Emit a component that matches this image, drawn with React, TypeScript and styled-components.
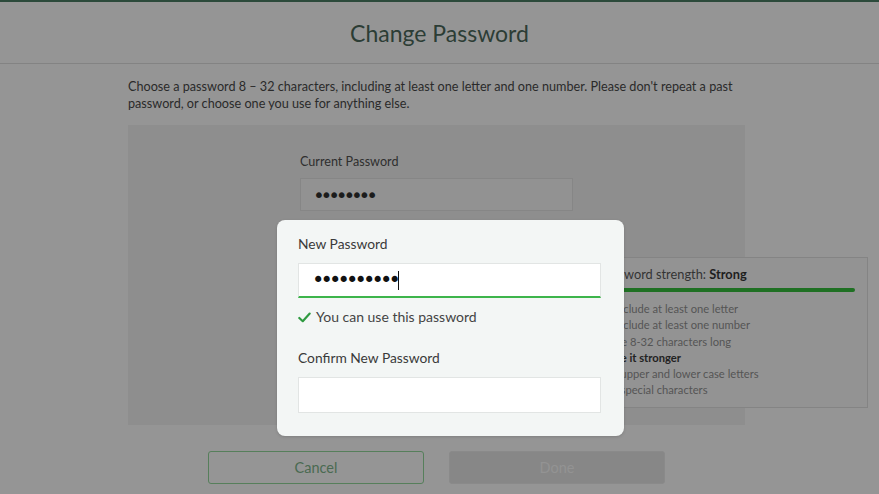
import React from "react";
import styled, { createGlobalStyle } from "styled-components";

const Global = createGlobalStyle`
  html, body { margin: 0; padding: 0; }
  body {
    background: #959595;
    font-family: "Segoe UI", Lato, "Noto Sans", sans-serif;
    -webkit-font-smoothing: antialiased;
  }
`;

const Page = styled.div`
  position: relative;
  width: 879px;
  height: 494px;
  overflow: hidden;
  background: #959595;
`;

const TopBar = styled.div`
  height: 2px;
  background: #2c4a3b;
`;

const Header = styled.header`
  height: 61px;
  display: flex;
  align-items: center;
  justify-content: center;
  border-bottom: 1px solid #838383;
`;

const Title = styled.h1`
  margin: 0;
  font-size: 23px;
  font-weight: 400;
  color: #2c3d35;
`;

const Main = styled.main`
  width: 617px;
  padding-left: 128px;
`;

const Intro = styled.p`
  margin: 14px 0 0;
  font-size: 12.65px;
  line-height: 17px;
  color: #2a2a2a;
`;

const Panel = styled.section`
  margin-top: 13px;
  height: 300px;
  box-sizing: border-box;
  background: #8e8e8e;
  padding: 28px 0 0 172px;
`;

const Field = styled.div<{ $gap?: number }>`
  display: flex;
  flex-direction: column;
  gap: ${(p) => p.$gap ?? 8}px;
`;

const Label = styled.label<{ $dim?: boolean }>`
  font-size: ${(p) => (p.$dim ? 12.6 : 13.8)}px;
  line-height: ${(p) => (p.$dim ? 17 : 18)}px;
  color: ${(p) => (p.$dim ? "#2f2f2f" : "#3a3a3a")};
`;

const DimInput = styled.div`
  width: 273px;
  height: 33px;
  box-sizing: border-box;
  border: 1px solid #868686;
  background: #929292;
  display: flex;
  align-items: center;
  padding-left: 12px;
`;

const Dots = styled.span<{ $live?: boolean }>`
  font-family: "DejaVu Sans", sans-serif;
  line-height: 1;
  font-size: ${(p) => (p.$live ? 21 : 20)}px;
  letter-spacing: ${(p) => (p.$live ? -3.9 : -4.2)}px;
  color: ${(p) => (p.$live ? "#111" : "#1c1c1c")};
`;

const Actions = styled.div`
  margin-top: 26px;
  display: flex;
  justify-content: center;
  gap: 25px;
`;

const Button = styled.button<{ $primary?: boolean }>`
  width: 216px;
  height: 33px;
  border-radius: 3px;
  font-family: inherit;
  font-size: 14.5px;
  border: 1px solid ${(p) => (p.$primary ? "#8a8a8a" : "#567f5b")};
  background: ${(p) => (p.$primary ? "#878787" : "transparent")};
  color: ${(p) => (p.$primary ? "#939393" : "#4a6a51")};
  padding: 0;
`;

const Strength = styled.aside`
  position: absolute;
  left: 588px;
  top: 257px;
  width: 280px;
  height: 151px;
  box-sizing: border-box;
  border: 1px solid #848484;
  background: #939393;
  padding: 7px 12px 0 10px;
`;

const StrengthTitle = styled.div`
  font-size: 12.8px;
  line-height: 18px;
  color: #333;
  b { color: #1e1e1e; font-weight: 700; }
`;

const Bar = styled.div`
  margin-top: 5px;
  height: 4px;
  border-radius: 2px;
  background: #1f7023;
`;

const Rules = styled.ul`
  list-style: none;
  margin: 9px 0 0;
  padding: 0;
`;

const Rule = styled.li<{ $heading?: boolean; $met?: boolean }>`
  font-size: 11.2px;
  line-height: 16.3px;
  height: 16.3px;
  display: flex;
  align-items: center;
  gap: 4px;
  color: ${(p) => (p.$heading ? "#222" : "#555")};
  font-weight: ${(p) => (p.$heading ? 700 : 400)};
  padding-left: ${(p) => (p.$met ? 1 : 0)}px;
`;

const Spotlight = styled.div`
  position: absolute;
  left: 277px;
  top: 220px;
  width: 347px;
  height: 216px;
  box-sizing: border-box;
  border-radius: 8px;
  background: #f3f6f5;
  box-shadow: 0 1px 3px rgba(0, 0, 0, 0.15);
  padding: 15px 23px 0 21px;
`;

const LiveInput = styled.div<{ $valid?: boolean }>`
  width: 303px;
  height: ${(p) => (p.$valid ? 35 : 36)}px;
  box-sizing: border-box;
  background: #fff;
  border: 1px solid #e2e5e4;
  border-bottom: ${(p) => (p.$valid ? "2px solid #3db54b" : "1px solid #e2e5e4")};
  display: flex;
  align-items: center;
  padding-left: 13px;
`;

const Caret = styled.span`
  display: inline-block;
  width: 1px;
  height: 19px;
  background: #111;
  margin-left: 1px;
`;

const Success = styled.div`
  margin-top: 10px;
  display: flex;
  align-items: center;
  gap: 5px;
  font-size: 14px;
  line-height: 18px;
  color: #444;
`;

const Spacer = styled.div`
  height: 23px;
`;

const CheckMark = ({ color, size, weight = 1.8 }: { color: string; size: number; weight?: number }) => (
  <svg width={size} height={size} viewBox="0 0 12 12" fill="none">
    <path d="M1.2 6.4 L4.4 9.4 L10.8 2.4" stroke={color} strokeWidth={weight} strokeLinecap="round" strokeLinejoin="round" />
  </svg>
);

export default function App() {
  return (
    <>
      <Global />
      <Page>
        <TopBar />
        <Header>
          <Title>Change Password</Title>
        </Header>
        <Main>
          <Intro>
            Choose a password 8 – 32 characters, including at least one letter and one number. Please don't repeat a past
            password, or choose one you use for anything else.
          </Intro>
          <Panel>
            <Field>
              <Label $dim>Current Password</Label>
              <DimInput>
                <Dots>••••••••</Dots>
              </DimInput>
            </Field>
          </Panel>
          <Actions>
            <Button>Cancel</Button>
            <Button $primary>Done</Button>
          </Actions>
        </Main>

        <Strength>
          <StrengthTitle>
            Password strength: <b>Strong</b>
          </StrengthTitle>
          <Bar />
          <Rules>
            <Rule $met>
              <CheckMark color="#3d3d3d" size={10} />
              Include at least one letter
            </Rule>
            <Rule $met>
              <CheckMark color="#3d3d3d" size={10} />
              Include at least one number
            </Rule>
            <Rule $met>
              <CheckMark color="#3d3d3d" size={10} />
              Be 8-32 characters long
            </Rule>
            <Rule $heading>Make it stronger</Rule>
            <Rule>Use upper and lower case letters</Rule>
            <Rule>Use special characters</Rule>
          </Rules>
        </Strength>

        <Spotlight>
          <Field $gap={10}>
            <Label>New Password</Label>
            <LiveInput $valid>
              <Dots $live>••••••••••</Dots>
              <Caret />
            </LiveInput>
          </Field>
          <Success>
            <CheckMark color="#2e9a40" size={13} weight={2} />
            You can use this password
          </Success>
          <Spacer />
          <Field $gap={10}>
            <Label>Confirm New Password</Label>
            <LiveInput />
          </Field>
        </Spotlight>
      </Page>
    </>
  );
}
